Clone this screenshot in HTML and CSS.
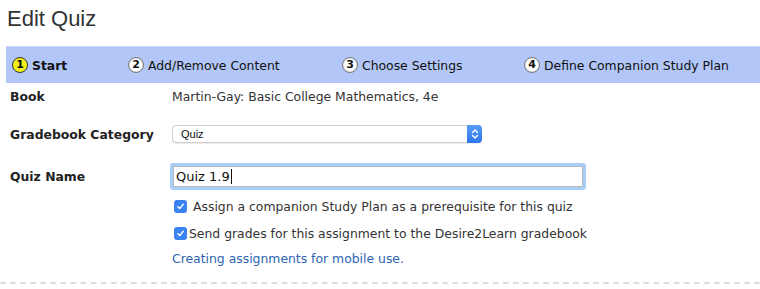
FILE: index.html
```html
<!DOCTYPE html>
<html>
<head>
<meta charset="utf-8">
<link rel="stylesheet" href="styles.css">
</head>
<body>
<div class="page">
  <h1 class="title">Edit Quiz</h1>
  <div class="steps">
    <div class="step step-1 active"><span class="num">1</span><span class="label">Start</span></div>
    <div class="step step-2"><span class="num">2</span><span class="label">Add/Remove Content</span></div>
    <div class="step step-3"><span class="num">3</span><span class="label">Choose Settings</span></div>
    <div class="step step-4"><span class="num">4</span><span class="label">Define Companion Study Plan</span></div>
  </div>
  <div class="form">
    <div class="row row-book">
      <div class="lbl">Book</div>
      <div class="val">Martin-Gay: Basic College Mathematics, 4e</div>
    </div>
    <div class="row row-cat">
      <div class="lbl">Gradebook Category</div>
      <div class="val">
        <div class="select"><span class="sel-text">Quiz</span><span class="sel-btn"><svg width="10" height="14" viewBox="0 0 10 14"><path d="M2.5 5.5 L5 3 L7.5 5.5 M2.5 8.5 L5 11 L7.5 8.5" fill="none" stroke="#fff" stroke-width="1.4" stroke-linecap="round" stroke-linejoin="round"/></svg></span></div>
      </div>
    </div>
    <div class="row row-name">
      <div class="lbl">Quiz Name</div>
      <div class="val">
        <div class="input"><span>Quiz 1.9</span><span class="caret"></span></div>
      </div>
    </div>
    <div class="checks">
      <div class="check check-1"><span class="box"><svg width="9" height="9" viewBox="0 0 9 9"><path d="M1.8 4.8 L3.8 6.6 L7.2 2.2" fill="none" stroke="#fff" stroke-width="1.4" stroke-linecap="round" stroke-linejoin="round"/></svg></span><span class="ctext">Assign a companion Study Plan as a prerequisite for this quiz</span></div>
      <div class="check check-2"><span class="box"><svg width="9" height="9" viewBox="0 0 9 9"><path d="M1.8 4.8 L3.8 6.6 L7.2 2.2" fill="none" stroke="#fff" stroke-width="1.4" stroke-linecap="round" stroke-linejoin="round"/></svg></span><span class="ctext">Send grades for this assignment to the Desire2Learn gradebook</span></div>
      <a class="link" href="#">Creating assignments for mobile use.</a>
    </div>
  </div>
  <div class="divider"></div>
</div>
</body>
</html>
```
FILE: styles.css
```css
html, body {
  margin: 0;
  padding: 0;
  background: #fff;
}
body {
  font-family: "DejaVu Sans", Verdana, sans-serif;
  font-size: 12.4px;
  color: #222;
  width: 760px;
  height: 289px;
  overflow: hidden;
}
.page {
  display: flex;
  flex-direction: column;
}
.title {
  margin: 0;
  padding: 4px 0 0 7px;
  height: 46px;
  box-sizing: border-box;
  font-family: "Liberation Sans", Arial, sans-serif;
  font-weight: normal;
  font-size: 22px;
  line-height: 30px;
  color: #333;
}
.steps {
  margin-left: 6px;
  height: 37px;
  background: #b2c6f7;
  display: flex;
  align-items: center;
  border-top: 1px solid #c8d6f9;
  box-sizing: border-box;
}
.step {
  display: flex;
  align-items: center;
  color: #111;
}
.step-1 { margin-left: 6px; width: 116px; }
.step-2 { width: 214px; }
.step-3 { width: 182px; }
.num {
  width: 16px;
  height: 16px;
  border-radius: 50%;
  background: #fff;
  border: 1px solid #777;
  box-sizing: border-box;
  font-weight: bold;
  font-size: 11px;
  line-height: 14px;
  text-align: center;
  margin-right: 4px;
  box-shadow: inset 0 0 0 1px #e6e6e6;
}
.active .num {
  background: #f4ef1a;
  border-color: #333;
  box-shadow: none;
}
.active .label { font-weight: bold; }
.form {
  display: flex;
  flex-direction: column;
}
.row {
  display: flex;
  align-items: center;
}
.lbl {
  width: 162px;
  padding-left: 10px;
  font-weight: bold;
  color: #222;
}
.val { color: #333; }
.row-book { height: 28px; margin-top: -1px; }
.row-cat { height: 36px; margin-top: 6px; }
.row-name { height: 30px; margin-top: 9px; }
.select {
  width: 310px;
  height: 18px;
  border: 1px solid #cfcfcf;
  border-radius: 4px;
  display: flex;
  align-items: center;
  justify-content: space-between;
  font-size: 11px;
  box-sizing: border-box;
  background: #fff;
  box-shadow: 0 1px 1px rgba(0,0,0,0.08);
  font-family: "Liberation Sans", Arial, sans-serif;
  color: #111;
}
.sel-text { padding-left: 8px; }
.sel-btn {
  width: 15px;
  height: 18px;
  margin-right: -1px;
  background: linear-gradient(#5a9cf7, #2f74ee);
  border-radius: 0 4px 4px 0;
  display: flex;
  align-items: center;
  justify-content: center;
}
.row-name .val { margin-left: -2px; }
.input {
  width: 416px;
  height: 27px;
  box-sizing: border-box;
  border: 3px solid #a9cdf7;
  border-radius: 3px;
  padding-left: 3px;
  display: flex;
  align-items: center;
  font-size: 13px;
  color: #111;
  box-shadow: inset 0 0 0 1px #b9b9b9;
}
.caret {
  width: 1px;
  height: 15px;
  background: #111;
  margin-left: 1px;
}
.checks {
  padding-left: 174px;
  display: flex;
  flex-direction: column;
}
.check {
  display: flex;
  align-items: center;
  color: #333;
  height: 27px;
}
.check-1 { margin-top: 2px; }
.box {
  width: 13px;
  height: 13px;
  border-radius: 3px;
  background: #3b82f1;
  display: flex;
  align-items: center;
  justify-content: center;
}
.check-1 .box { margin-right: 6px; }
.check-2 .box { margin-right: 2px; }
.link {
  margin-left: -2px;
  height: 22px;
  color: #2c64b2;
  text-decoration: none;
  line-height: 24px;
}
.divider {
  margin-top: 13px;
  height: 0;
  border-top: 2px dashed #ddd;
}
```
